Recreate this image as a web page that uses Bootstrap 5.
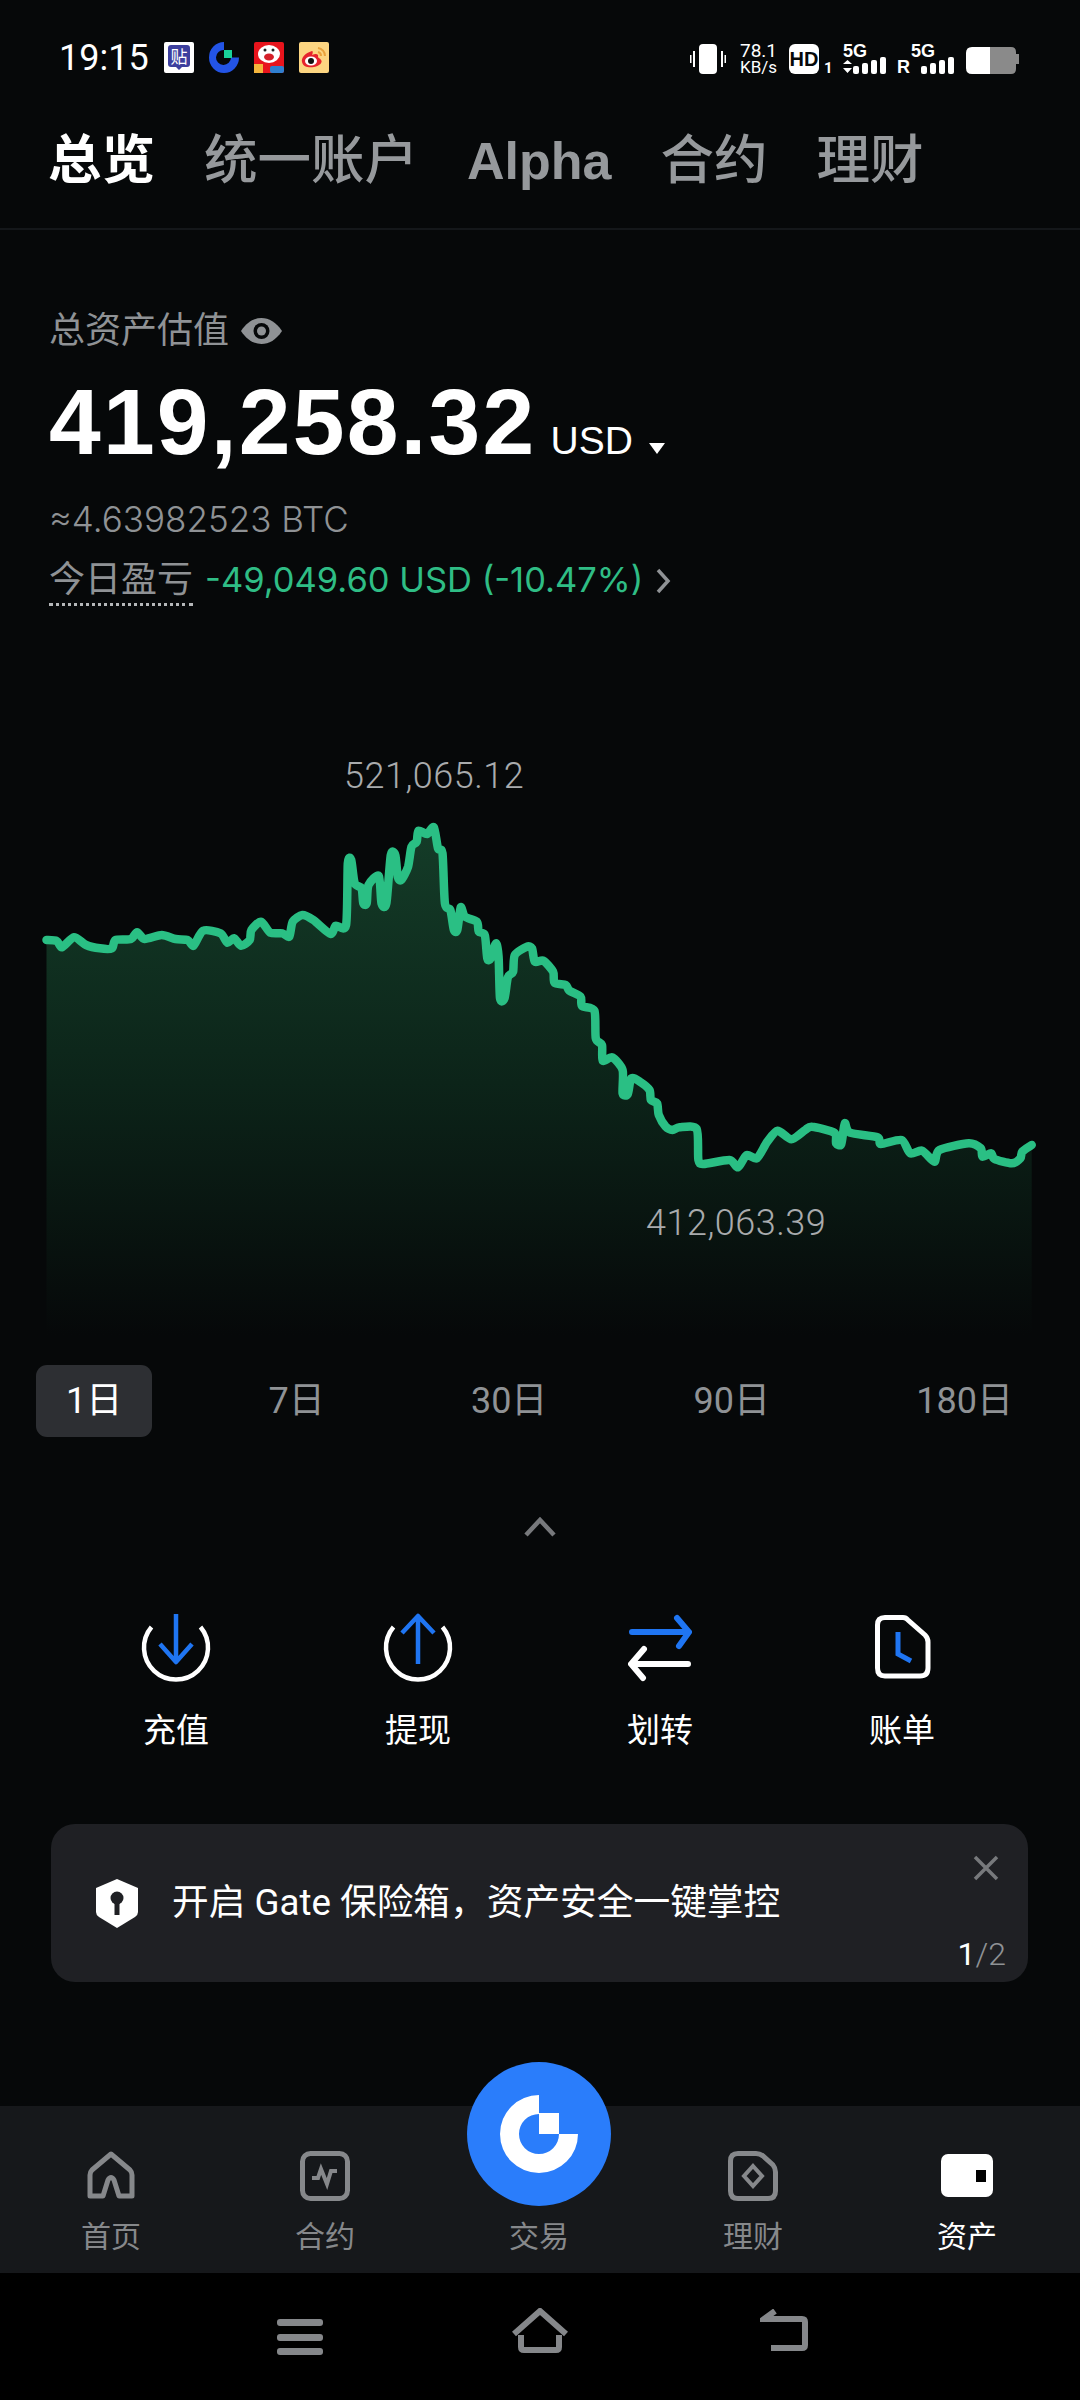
<!DOCTYPE html>
<html lang="zh-CN">
<head>
    <meta charset="UTF-8">
    <meta name="viewport" content="width=device-width, initial-scale=1.0">
    <title>总览</title>
    <link href="https://cdn.jsdelivr.net/npm/bootstrap@5.3.0/dist/css/bootstrap.min.css" rel="stylesheet">
    <style>
        body { background: #060809; color: #fff; font-family: "Roboto", "Noto Sans CJK SC", sans-serif; width: 1080px; }
        svg { display: block; }
        .phone { min-height: 2400px; }

        .status-bar { height: 116px; padding: 42px 60px 0 59px; }
        .status-time { font-size: 36px; line-height: 30px; width: 89px; margin-right: 16px; }
        .app-tile { width: 30px; height: 31px; }
        .tile-char { position: absolute; left: 0; right: 0; top: 3px; text-align: center; font: 400 17px/22px "Noto Sans CJK SC", sans-serif; }
        .speed-text { font-size: 19px; line-height: 17px; width: 36px; text-align: center; margin-left: 14px; }
        .speed-text span { display: block; font-size: 17px; }
        .hd-tag { width: 30px; height: 30px; margin-left: 13px; background: #fff; border-radius: 6px; color: #060809; text-align: center; font: 700 20px/30px "Liberation Sans", sans-serif; }
        .sim-num { width: 7px; margin-left: 5px; font: 700 15px/15px "Roboto", sans-serif; align-self: flex-end; }
        .signal { height: 30px; width: 44px; margin-left: 12px; }
        .signal.second { width: 45px; margin-left: 3px; }
        .signal-text { position: absolute; left: 0; top: -2px; font: 700 18px/18px "Liberation Sans", sans-serif; }
        .sim-roam { width: 11px; margin-left: 10px; font: 700 18px/18px "Liberation Sans", sans-serif; align-self: flex-end; }
        .batt { margin-left: 10px; }

        .top-tabs { height: 114px; padding: 0 0 22px 48px; gap: 49px; border-bottom: 2px solid #14171a; }
        .top-tabs .nav-link { padding: 0; font: 500 53.5px/74px "Liberation Sans", "Noto Sans CJK SC", sans-serif; color: #96999c; }
        .top-tabs .nav-link.active { color: #fff; font-weight: 700; }
        .top-tabs .alpha { font-size: 52px; font-weight: 700; }

        .summary { padding-left: 49px; margin-top: 81px; }
        .asset-label { font-size: 36px; line-height: 40px; color: #8f9295; gap: 12px; }
        .asset-value { margin-top: 26px; height: 90px; }
        .asset-num { font: 700 93px/90px "Liberation Sans", sans-serif; letter-spacing: 2.2px; }
        .asset-unit { font: 400 39px/90px "Liberation Sans", sans-serif; margin-left: 14px; }
        .asset-btc { margin-top: 32px; font-family: "Inter", sans-serif; font-size: 35px; line-height: 40px; font-weight: 300; color: #8f9295; }
        .pnl-row { margin-top: 21px; height: 40px; }
        .pnl-label { font-size: 36px; line-height: 40px; color: #8f9295; border-bottom: 3px dotted #b5b7b9; height: 46px; margin-right: 12px; }
        .pnl-value { font-family: "Inter", sans-serif; font-size: 34.5px; line-height: 40px; color: #2fbd85; margin-right: 12px; }

        .chart-box { height: 700px; margin-top: 40px; }
        .chart-tag { position: absolute; font-size: 36px; line-height: 40px; font-weight: 300; letter-spacing: .5px; color: #a9abad; }

        .range-row { padding: 25px 37px 0 36px; }
        .range-item { height: 72px; padding: 0 30px; line-height: 72px; font-size: 36px; color: #8f9295; border-radius: 11px; }
        .range-item.is-on { background: #2d2f33; color: #fff; }

        .fold-arrow { margin-top: 80px; }
        .actions { width: 968px; margin: 76px 0 0 55px; }
        .action-icon { height: 70px; }
        .action-label { font-size: 33px; line-height: 40px; margin-top: 28px; }

        .notice { margin: 73px 52px 0 51px; height: 158px; background: #1f2024; border-radius: 24px; padding-left: 45px; gap: 34px; color: #fff; }
        .notice-text { font-size: 36.7px; line-height: 40px; }
        .notice-close { position: absolute; top: 31px; right: 29px; }
        .notice-count { position: absolute; right: 22px; bottom: 10px; font-size: 32px; line-height: 36px; font-weight: 300; color: #8f9295; }
        .notice-count b { color: #fff; font-weight: 400; }

        .tab-bar { height: 167px; background: #16181b; padding: 45px 4px 0; }
        .tab-item { width: 214px; color: #86888b; }
        .tab-icon { height: 50px; }
        .tab-item span { display: block; font-size: 30px; line-height: 40px; margin-top: 16px; }
        .tab-item.is-on { color: #fff; }
        .fab { position: absolute; left: 467px; top: -44px; width: 144px; height: 144px; border-radius: 50%; background: #2a7dfb; }

        .sys-nav { height: 127px; background: #000; padding-top: 39px; }
        .sys-nav svg { position: relative; }
    </style>
</head>
<body>
<div class="phone d-flex flex-column">

    <!-- status bar -->
    <div class="status-bar d-flex justify-content-between align-items-start">
        <div class="d-flex align-items-center">
            <div class="status-time">19:15</div>
            <div class="d-flex" style="gap:15px">
                <div class="app-tile position-relative">
                    <svg width="30" height="31" viewBox="0 0 30 31"><rect width="30" height="31" rx="2" fill="#fff"/><path d="M4 6 Q4 3 7 3 H23 Q26 3 26 6 V22 Q26 25 23 25 H18 L15 28 L12 25 H7 Q4 25 4 22Z" fill="#3d3f9e"/></svg>
                    <div class="tile-char">贴</div>
                </div>
                <svg width="30" height="31" viewBox="0 0 30 31"><path d="M15 0 A15 15.500 0 1 0 30 15.500 H22 A7.500 7.500 0 1 1 15 8 Z" fill="#2354e6"/><rect x="15" y="8" width="8" height="8" fill="#19d29a"/></svg>
                <svg width="30" height="31" viewBox="0 0 30 31"><rect width="30" height="31" rx="2" fill="#e8141c"/><ellipse cx="15" cy="12" rx="11" ry="9" fill="#fff"/><ellipse cx="15" cy="15" rx="5" ry="3.500" fill="#d5202a"/><circle cx="11" cy="8" r="1.500" fill="#222"/><circle cx="19" cy="8" r="1.500" fill="#222"/><rect x="0" y="22" width="9" height="9" fill="#f4b53c"/><rect x="16" y="24" width="14" height="7" rx="2" fill="#2f7fd0"/></svg>
                <svg width="30" height="31" viewBox="0 0 30 31"><rect width="30" height="31" rx="2" fill="#fcd581"/><path d="M13 9 C6 11 2 16 3 20 C4 25 10 26 15 25 C21 24 24 20 22 18 C21 16 19 16 19 15 C20 12 17 11 13 13 C14 11 14 9 13 9Z" fill="#e6232c"/><ellipse cx="12" cy="19" rx="6" ry="4.500" fill="#fff"/><circle cx="12" cy="19" r="3" fill="#111"/><path d="M19 6 A8 8 0 0 1 26 14 M19 10 A4 4 0 0 1 22 14" fill="none" stroke="#e9a23b" stroke-width="2"/></svg>
            </div>
        </div>
        <div class="d-flex align-items-center">
            <svg width="36" height="30" viewBox="0 0 36 30" fill="#fff"><rect x="9" width="18" height="30" rx="4"/><rect x="3" y="7" width="2" height="16"/><rect x="0" y="11" width="1.500" height="8"/><rect x="31" y="7" width="2" height="16"/><rect x="34.500" y="11" width="1.500" height="8"/></svg>
            <div class="speed-text">78.1<span>KB/s</span></div>
            <div class="hd-tag">HD</div>
            <div class="sim-num">1</div>
            <div class="signal position-relative">
                <div class="signal-text">5G</div>
                <svg width="44" height="30" viewBox="0 0 44 30" fill="#fff"><path d="M4.500 16 L9 20 H0Z M0 24 H9 L4.500 29Z"/><rect x="10" y="22" width="6" height="8" rx="2"/><rect x="19" y="19" width="6" height="11" rx="2"/><rect x="28" y="16" width="6" height="14" rx="2"/><rect x="37" y="13" width="6" height="17" rx="2"/></svg>
            </div>
            <div class="sim-roam">R</div>
            <div class="signal second position-relative">
                <div class="signal-text">5G</div>
                <svg width="45" height="30" viewBox="0 0 45 30" fill="#fff"><rect x="10" y="22" width="6" height="8" rx="2"/><rect x="19" y="19" width="6" height="11" rx="2"/><rect x="28" y="16" width="6" height="14" rx="2"/><rect x="37" y="13" width="6" height="17" rx="2"/></svg>
            </div>
            <svg class="batt" width="54" height="30" viewBox="0 0 54 30"><path d="M24 3 H6 Q0 3 0 9 V24 Q0 30 6 30 H24Z" fill="#fff"/><path d="M24 3 H45 Q50 3 50 8 V10 H53 V20 H50 V25 Q50 30 45 30 H24Z" fill="#8a8a8a"/></svg>
        </div>
    </div>

    <!-- top tabs -->
    <ul class="nav top-tabs align-items-center">
        <li class="nav-item"><a class="nav-link active" href="#">总览</a></li>
        <li class="nav-item"><a class="nav-link" href="#">统一账户</a></li>
        <li class="nav-item"><a class="nav-link alpha" href="#">Alpha</a></li>
        <li class="nav-item"><a class="nav-link" href="#">合约</a></li>
        <li class="nav-item"><a class="nav-link" href="#">理财</a></li>
    </ul>

    <!-- balance -->
    <div class="summary">
        <div class="asset-label d-flex align-items-center">
            总资产估值
            <svg width="41" height="28" viewBox="0 0 41 28"><path d="M0 14 C6 5 13 1 20.500 1 C28 1 35 5 41 14 C35 23 28 27 20.500 27 C13 27 6 23 0 14Z" fill="#8f9295"/><circle cx="20.500" cy="14" r="8" fill="#060809"/><circle cx="20.500" cy="14" r="4.500" fill="#8f9295"/></svg>
        </div>
        <div class="asset-value d-flex align-items-baseline">
            <div class="asset-num">419,258.32</div>
            <div class="asset-unit">USD</div>
            <svg class="ms-3" width="16" height="11" viewBox="0 0 16 11"><path d="M0 0 H16 L8 11Z" fill="#fff"/></svg>
        </div>
        <div class="asset-btc">≈4.63982523 BTC</div>
        <div class="pnl-row d-flex align-items-start">
            <div class="pnl-label">今日盈亏</div>
            <div class="pnl-value">-49,049.60 USD (-10.47%)</div>
            <svg class="mt-2" width="16" height="26" viewBox="0 0 16 26"><path d="M3 2 L13 13 L3 24" fill="none" stroke="#8f9295" stroke-width="3.500"/></svg>
        </div>
    </div>

    <!-- chart, drawn in page coordinates -->
    <div class="chart-box position-relative">
        <svg width="1080" height="700" viewBox="0 640 1080 700">
            <defs>
                <linearGradient id="areaFill" gradientUnits="userSpaceOnUse" x1="0" y1="830" x2="0" y2="1335">
                    <stop offset="0" stop-color="#143c28"/>
                    <stop offset="0.5" stop-color="#0c2419"/>
                    <stop offset="1" stop-color="#060809"/>
                </linearGradient>
            </defs>
            <path id="chartArea" fill="url(#areaFill)"/>
            <path id="chartLine" fill="none" stroke="#2abf84" stroke-width="8.500" stroke-linejoin="round" stroke-linecap="round"/>
        </svg>
        <div class="chart-tag" style="left:344px;top:116px">521,065.12</div>
        <div class="chart-tag" style="left:646px;top:563px">412,063.39</div>
    </div>

    <!-- range -->
    <div class="range-row d-flex justify-content-between">
        <div class="range-item is-on">1日</div>
        <div class="range-item">7日</div>
        <div class="range-item">30日</div>
        <div class="range-item">90日</div>
        <div class="range-item">180日</div>
    </div>

    <svg class="fold-arrow mx-auto" width="32" height="20" viewBox="0 0 32 20"><path d="M2 18 L16 3 L30 18" fill="none" stroke="#77797c" stroke-width="4.500"/></svg>

    <!-- actions -->
    <div class="actions row g-0 text-center">
        <div class="col-3">
            <svg class="action-icon mx-auto" width="80" viewBox="0 0 80 70" fill="none">
                <path d="M15.500 14 A32 32 0 1 0 64.500 14" stroke="#fff" stroke-width="4.500"/>
                <path d="M40 1 V49 M24 31 L40 49 L56 31" stroke="#1f75f2" stroke-width="4.500" stroke-linejoin="round"/>
            </svg>
            <div class="action-label">充值</div>
        </div>
        <div class="col-3">
            <svg class="action-icon mx-auto" width="80" viewBox="0 0 80 70" fill="none">
                <path d="M15.500 14 A32 32 0 1 0 64.500 14" stroke="#fff" stroke-width="4.500"/>
                <path d="M40 51 V3 M24 20 L40 3 L56 20" stroke="#1f75f2" stroke-width="4.500" stroke-linejoin="round"/>
            </svg>
            <div class="action-label">提现</div>
        </div>
        <div class="col-3">
            <svg class="action-icon mx-auto" width="64" viewBox="0 0 64 70" fill="none" stroke-width="6" stroke-linecap="round">
                <path d="M4 19 H60 M49 5 L61 19 L51 33" stroke="#1f75f2"/>
                <path d="M60 51 H4 M16 36 L3 51 L15 65" stroke="#fff"/>
            </svg>
            <div class="action-label">划转</div>
        </div>
        <div class="col-3">
            <svg class="action-icon mx-auto" width="60" viewBox="0 0 60 70" fill="none" stroke-width="5">
                <path d="M13 4.500 H31 Q34 4.500 36 7 L53 22 Q56 25 56 29 V55 Q56 63 48 63 H13 Q5.500 63 5.500 55 V12 Q5.500 4.500 13 4.500Z" stroke="#fff"/>
                <path d="M26 19 V41 L39 48" stroke="#1f75f2"/>
            </svg>
            <div class="action-label">账单</div>
        </div>
    </div>

    <!-- vault notice -->
    <div class="notice card border-0 flex-row align-items-center position-relative">
        <svg width="42" height="49" viewBox="0 0 42 49"><path d="M21 0 L42 9 V33 Q42 36 39 38 L21 49 L3 38 Q0 36 0 33 V9Z" fill="#fff"/><circle cx="21" cy="19" r="6.500" fill="#1f2024"/><rect x="18.500" y="20" width="5" height="16" fill="#1f2024"/></svg>
        <div class="notice-text">开启 Gate 保险箱，资产安全一键掌控</div>
        <svg class="notice-close" width="26" height="26" viewBox="0 0 26 26"><path d="M2 2 L24 24 M24 2 L2 24" stroke="#77797c" stroke-width="3.500"/></svg>
        <div class="notice-count"><b>1</b>/2</div>
    </div>

    <!-- bottom tabs -->
    <div class="tab-bar mt-auto d-flex position-relative text-center">
        <div class="tab-item">
            <svg class="tab-icon mx-auto" width="50" viewBox="0 0 50 50" fill="none"><path d="M4 45 V24 Q4 21 6 19 L25 3 L44 19 Q46 21 46 24 V45 H33 L28 29 Q25 24 22 29 L17 45Z" stroke="currentColor" stroke-width="5" stroke-linejoin="round"/></svg>
            <span>首页</span>
        </div>
        <div class="tab-item">
            <svg class="tab-icon mx-auto" width="50" viewBox="0 0 50 50" fill="none" stroke="currentColor"><rect x="2.500" y="2.500" width="45" height="45" rx="8" stroke-width="5"/><path d="M12 27 H18 L21 18 L27 33 L31 20 H37" stroke-width="4"/></svg>
            <span>合约</span>
        </div>
        <div class="tab-item">
            <div class="tab-icon"></div>
            <span>交易</span>
        </div>
        <div class="tab-item">
            <svg class="tab-icon mx-auto" width="50" viewBox="0 0 50 50" fill="none" stroke="currentColor"><path d="M10 2.500 H28 Q32 2.500 35 5 L45 14 Q47.500 17 47.500 21 V40 Q47.500 47.500 40 47.500 H10 Q2.500 47.500 2.500 40 V10 Q2.500 2.500 10 2.500Z" stroke-width="5"/><path d="M25 15 L34 25 L25 35 L16 25Z" stroke-width="4"/></svg>
            <span>理财</span>
        </div>
        <div class="tab-item is-on">
            <svg class="tab-icon mx-auto" width="52" viewBox="0 0 52 50"><rect y="3" width="52" height="43" rx="7" fill="#fff"/><rect x="35" y="19" width="10" height="12" fill="#000"/></svg>
            <span>资产</span>
        </div>
        <div class="fab d-flex align-items-center justify-content-center">
            <svg width="78" height="78" viewBox="0 0 78 78"><path d="M39 0 A39 39 0 1 0 78 39 H59 A20 20 0 1 1 39 19Z" fill="#fff"/><rect x="39" y="18" width="20" height="21" fill="#fff"/></svg>
        </div>
    </div>

    <!-- system nav -->
    <div class="sys-nav d-flex">
        <svg style="left:277px" width="46" height="44" viewBox="0 0 46 44" fill="#85878a"><rect y="7" width="46" height="7" rx="3"/><rect y="22" width="46" height="7" rx="3"/><rect y="36" width="46" height="7" rx="3"/></svg>
        <svg style="left:465px;top:-4px" width="58" height="46" viewBox="0 0 58 46" fill="none" stroke="#85878a" stroke-width="6"><path d="M3 26 L29 3 L55 26"/><path d="M10 27 V39 Q10 42 13 42 H45 Q48 42 48 39 V27"/></svg>
        <svg style="left:656px;top:-3px" width="50" height="46" viewBox="0 0 50 46" fill="none" stroke="#85878a" stroke-width="6"><path d="M15 2 L4 10 H42 Q45 10 45 13 V36 Q45 39 42 39 H11"/></svg>
    </div>
</div>

<script>
    // chart points read off the reference, as [zoomX, zoomY] per crop
    const leftCrop = [[135,600],[165,603],[180,622],[215,592],[250,615],[290,625],[325,625],[335,600],[380,597],[398,577],[420,597],[470,585],[510,597],[545,600],[562,617],[590,572],[640,580],[660,608],[680,595],[700,617],[725,600],[730,570],[758,545],[785,578],[820,580],[840,590],[850,545],[878,525],[910,540],[960,582],[975,557],[1005,555],[1010,370],[1020,360],[1030,430],[1050,445],[1055,490],[1065,490],[1070,435],[1100,408],[1108,490],[1122,490],[1135,345],[1148,345],[1155,410],[1165,420],[1185,380],[1195,320],[1210,305],[1215,272],[1240,282],[1260,262],[1272,325],[1285,340],[1292,490],[1308,510],[1318,570],[1328,570],[1338,502],[1350,530],[1385,545],[1390,575],[1408,585],[1415,655],[1425,655],[1440,610],[1448,650],[1452,775],[1465,775],[1475,712],[1490,695],[1495,645],[1530,620],[1545,625],[1553,665]];
    const rightCrop = [[10,62],[38,95],[42,128],[75,135],[85,152],[118,170],[122,198],[158,212],[162,295],[180,315],[182,362],[210,352],[240,390],[240,460],[255,462],[265,415],[290,425],[318,450],[322,480],[340,490],[345,525],[365,560],[385,570],[405,562],[455,567],[460,660],[475,672],[550,660],[575,682],[600,645],[630,655],[660,605],[690,572],[730,598],[770,570],[790,560],[855,578],[860,610],[875,612],[885,550],[900,578],[980,592],[990,612],[1050,600],[1075,640],[1110,632],[1145,665],[1160,630],[1245,610],[1280,625],[1285,650],[1310,640],[1320,657],[1370,670],[1395,655],[1400,635],[1428,615]];
    const pts = leftCrop.map(p => [p[0] / 2.904, 740 + p[1] / 3])
        .concat(rightCrop.map(p => [540 + p[0] / 2.904, 940 + p[1] / 3]));

    let line = `M${pts[0][0].toFixed(1)} ${pts[0][1].toFixed(1)}`;
    for (let i = 0; i < pts.length - 1; i++) {
        const a = pts[i - 1] || pts[i], b = pts[i], c = pts[i + 1], d = pts[i + 2] || c;
        const c1 = [b[0] + (c[0] - a[0]) / 8, b[1] + (c[1] - a[1]) / 8];
        const c2 = [c[0] - (d[0] - b[0]) / 8, c[1] - (d[1] - b[1]) / 8];
        line += `C${c1[0].toFixed(1)} ${c1[1].toFixed(1)} ${c2[0].toFixed(1)} ${c2[1].toFixed(1)} ${c[0].toFixed(1)} ${c[1].toFixed(1)}`;
    }
    document.getElementById('chartLine').setAttribute('d', line);
    document.getElementById('chartArea').setAttribute('d', `${line}V1335H${pts[0][0].toFixed(1)}Z`);
</script>
<script src="https://cdn.jsdelivr.net/npm/bootstrap@5.3.0/dist/js/bootstrap.bundle.min.js"></script>
</body>
</html>
